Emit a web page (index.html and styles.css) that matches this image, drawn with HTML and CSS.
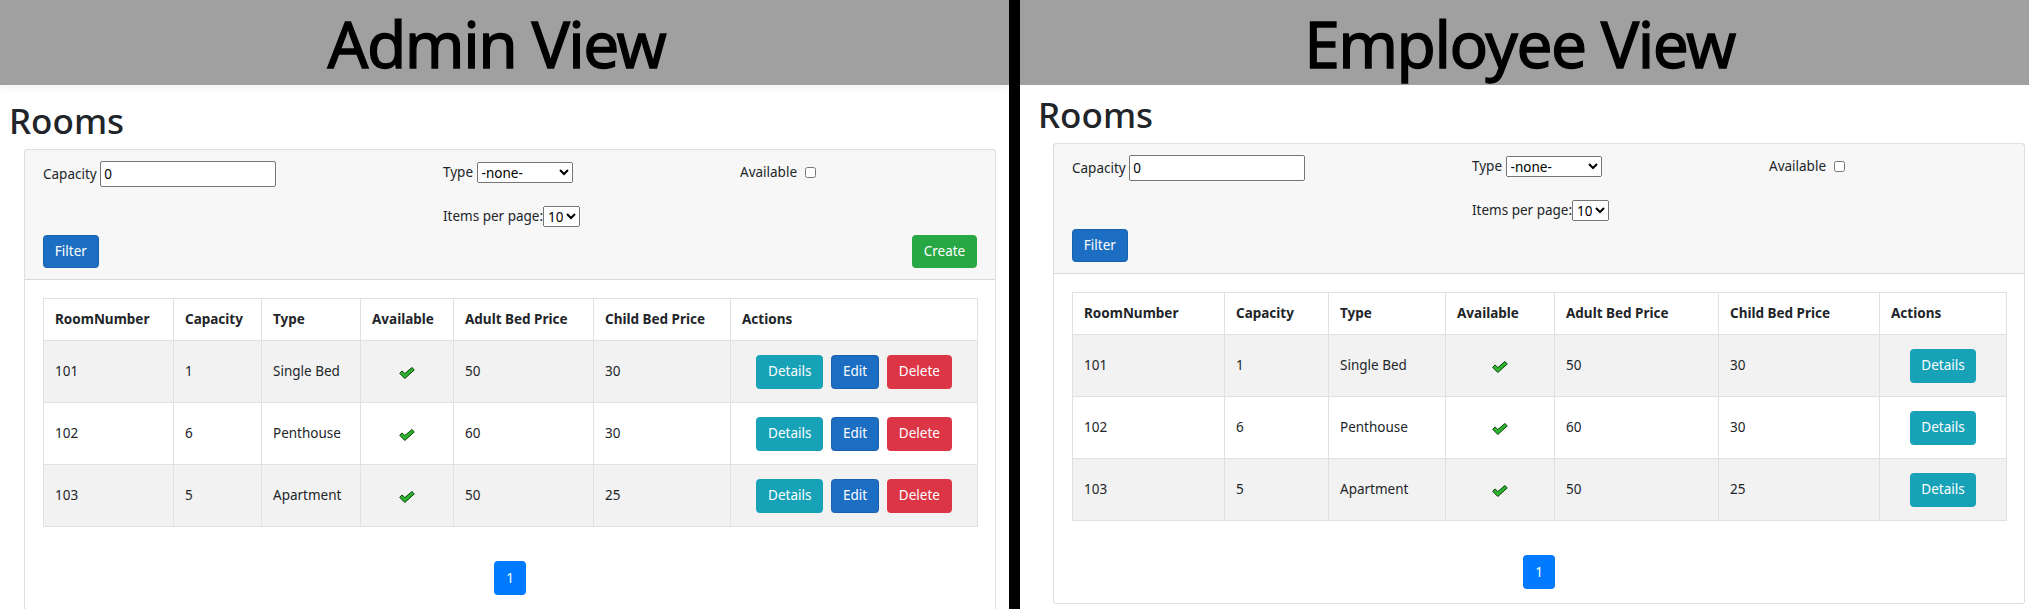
FILE: index.html
```html
<!DOCTYPE html>
<html lang="en">
<head>
<meta charset="utf-8">
<title>Rooms - Admin and Employee views</title>
<link rel="stylesheet" href="styles.css">
</head>
<body>
<div class="screen">
  <section class="panel panel-admin">
    <header class="banner"><span class="banner-title">Admin View</span></header>
    <main class="content">
      <h1 class="page-title">Rooms</h1>
      <div class="card">
        <div class="card-header">
          <div class="filters">
            <label class="field f-capacity">Capacity <input class="txt" type="text" value="0"></label>
            <label class="field f-type">Type <select class="sel sel-type"><option>-none-</option></select></label>
            <label class="field f-avail">Available <input class="chk" type="checkbox"></label>
            <label class="field f-items">Items per page:<select class="sel sel-items"><option>10</option></select></label>
          </div>
          <div class="toolbar">
            <button class="btn btn-primary">Filter</button>
            <button class="btn btn-success">Create</button>
          </div>
        </div>
        <div class="card-body">
          <table class="table">
            <colgroup>
              <col class="a-c1"><col class="a-c2"><col class="a-c3"><col class="a-c4"><col class="a-c5"><col class="a-c6"><col class="a-c7">
            </colgroup>
            <thead>
              <tr><th>RoomNumber</th><th>Capacity</th><th>Type</th><th>Available</th><th>Adult Bed Price</th><th>Child Bed Price</th><th>Actions</th></tr>
            </thead>
            <tbody>
              <tr>
                <td>101</td><td>1</td><td>Single Bed</td>
                <td class="center"><svg class="check" viewBox="0 0 16 12" width="16" height="12"><polygon points="0.7,6.3 3.1,3.9 5.8,6.6 12.9,0.5 15.3,2.9 5.8,11.5" /></svg></td>
                <td>50</td><td>30</td>
                <td class="center"><span class="row-actions"><button class="btn btn-sm btn-info">Details</button><button class="btn btn-sm btn-primary">Edit</button><button class="btn btn-sm btn-danger">Delete</button></span></td>
              </tr>
              <tr>
                <td>102</td><td>6</td><td>Penthouse</td>
                <td class="center"><svg class="check" viewBox="0 0 16 12" width="16" height="12"><polygon points="0.7,6.3 3.1,3.9 5.8,6.6 12.9,0.5 15.3,2.9 5.8,11.5" /></svg></td>
                <td>60</td><td>30</td>
                <td class="center"><span class="row-actions"><button class="btn btn-sm btn-info">Details</button><button class="btn btn-sm btn-primary">Edit</button><button class="btn btn-sm btn-danger">Delete</button></span></td>
              </tr>
              <tr>
                <td>103</td><td>5</td><td>Apartment</td>
                <td class="center"><svg class="check" viewBox="0 0 16 12" width="16" height="12"><polygon points="0.7,6.3 3.1,3.9 5.8,6.6 12.9,0.5 15.3,2.9 5.8,11.5" /></svg></td>
                <td>50</td><td>25</td>
                <td class="center"><span class="row-actions"><button class="btn btn-sm btn-info">Details</button><button class="btn btn-sm btn-primary">Edit</button><button class="btn btn-sm btn-danger">Delete</button></span></td>
              </tr>
            </tbody>
          </table>
          <ul class="pagination"><li><a class="page-link">1</a></li></ul>
        </div>
      </div>
    </main>
  </section>

  <div class="divider"></div>

  <section class="panel panel-employee">
    <header class="banner"><span class="banner-title">Employee View</span></header>
    <main class="content">
      <h1 class="page-title">Rooms</h1>
      <div class="card">
        <div class="card-header">
          <div class="filters">
            <label class="field f-capacity">Capacity <input class="txt" type="text" value="0"></label>
            <label class="field f-type">Type <select class="sel sel-type"><option>-none-</option></select></label>
            <label class="field f-avail">Available <input class="chk" type="checkbox"></label>
            <label class="field f-items">Items per page:<select class="sel sel-items"><option>10</option></select></label>
          </div>
          <div class="toolbar">
            <button class="btn btn-primary">Filter</button>
          </div>
        </div>
        <div class="card-body">
          <table class="table">
            <colgroup>
              <col class="e-c1"><col class="e-c2"><col class="e-c3"><col class="e-c4"><col class="e-c5"><col class="e-c6"><col class="e-c7">
            </colgroup>
            <thead>
              <tr><th>RoomNumber</th><th>Capacity</th><th>Type</th><th>Available</th><th>Adult Bed Price</th><th>Child Bed Price</th><th>Actions</th></tr>
            </thead>
            <tbody>
              <tr>
                <td>101</td><td>1</td><td>Single Bed</td>
                <td class="center"><svg class="check" viewBox="0 0 16 12" width="16" height="12"><polygon points="0.7,6.3 3.1,3.9 5.8,6.6 12.9,0.5 15.3,2.9 5.8,11.5" /></svg></td>
                <td>50</td><td>30</td>
                <td class="center"><span class="row-actions"><button class="btn btn-sm btn-info">Details</button></span></td>
              </tr>
              <tr>
                <td>102</td><td>6</td><td>Penthouse</td>
                <td class="center"><svg class="check" viewBox="0 0 16 12" width="16" height="12"><polygon points="0.7,6.3 3.1,3.9 5.8,6.6 12.9,0.5 15.3,2.9 5.8,11.5" /></svg></td>
                <td>60</td><td>30</td>
                <td class="center"><span class="row-actions"><button class="btn btn-sm btn-info">Details</button></span></td>
              </tr>
              <tr>
                <td>103</td><td>5</td><td>Apartment</td>
                <td class="center"><svg class="check" viewBox="0 0 16 12" width="16" height="12"><polygon points="0.7,6.3 3.1,3.9 5.8,6.6 12.9,0.5 15.3,2.9 5.8,11.5" /></svg></td>
                <td>50</td><td>25</td>
                <td class="center"><span class="row-actions"><button class="btn btn-sm btn-info">Details</button></span></td>
              </tr>
            </tbody>
          </table>
          <ul class="pagination"><li><a class="page-link">1</a></li></ul>
        </div>
      </div>
    </main>
  </section>
</div>
</body>
</html>
```

FILE: styles.css
```css
* { box-sizing: border-box; }

html, body { margin: 0; padding: 0; }

body {
  font-family: "Noto Sans", "Open Sans", sans-serif;
  font-size: 13.5px;
  line-height: 1.5;
  color: #212529;
  background: #fff;
}

.screen {
  display: flex;
  width: 2029px;
  height: 609px;
  overflow: hidden;
}

.panel {
  display: flex;
  flex-direction: column;
  flex: none;
}

.panel-admin { width: 1009px; }
.panel-employee { flex: 1; }

.divider {
  flex: none;
  width: 11px;
  background: #000;
}

/* banner */
.banner {
  height: 85px;
  flex: none;
  background: #a0a0a0;
  text-align: center;
  padding-top: 0;
}

.panel-admin .banner {
  padding-right: 16px;
  box-shadow: 0 3px 8px rgba(0, 0, 0, 0.06);
  position: relative;
  z-index: 1;
}

.panel-employee .banner { padding-right: 10px; }

.banner-title {
  display: inline-block;
  font-size: 64px;
  line-height: 88px;
  font-weight: 400;
  letter-spacing: -1.5px;
  -webkit-text-stroke: 1.3px #000;
  color: #000;
}

/* page heading */
.page-title {
  margin: 15px 0 7px;
  padding-left: 9px;
  font-size: 35px;
  font-weight: 500;
  line-height: 42px;
}

.panel-employee .page-title {
  margin-top: 9px;
  padding-left: 18px;
}

/* card */
.card {
  width: 972px;
  margin-left: 24px;
  border: 1px solid rgba(0, 0, 0, 0.125);
  border-radius: 3.6px;
  background: #fff;
}

.panel-employee .card { margin-left: 33px; }

.card-header {
  background: rgba(0, 0, 0, 0.03);
  border-bottom: 1px solid rgba(0, 0, 0, 0.125);
  padding: 11px 18px;
}

.filters {
  display: grid;
  grid-template-columns: 400px 297px 1fr;
  grid-template-rows: 26px 21px;
  row-gap: 19px;
  align-items: start;
}

.field {
  display: flex;
  align-items: center;
  white-space: pre;
}

.f-capacity { grid-column: 1; grid-row: 1; height: 26px; }
.f-type { grid-column: 2; grid-row: 1; height: 21px; margin-top: 1px; }
.f-avail { grid-column: 3; grid-row: 1; height: 21px; margin-top: 1px; }
.f-items { grid-column: 2; grid-row: 2; height: 21px; }

.txt {
  width: 176px;
  height: 26px;
  margin: 0;
  padding: 1px 3px;
  font: inherit;
  font-size: 13.5px;
  color: #000;
  border: 1px solid #767676;
  border-radius: 2px;
  background: #fff;
}

.sel {
  height: 21px;
  margin: 0;
  font-family: inherit;
  font-size: 13.5px;
  color: #000;
}

.sel-type { width: 96px; }
.sel-items { width: 37px; }

.chk {
  width: 11px;
  height: 11px;
  margin: 0 0 0 4px;
}

.toolbar {
  display: flex;
  justify-content: space-between;
  margin-top: 8px;
}

/* buttons */
.btn {
  display: inline-flex;
  align-items: center;
  justify-content: center;
  height: 33px;
  padding: 0 10.8px;
  margin: 0;
  font-family: inherit;
  font-size: 13.5px;
  line-height: 1;
  color: #fff;
  border: 1px solid transparent;
  border-radius: 3.6px;
  cursor: pointer;
}

.btn-sm { height: 34px; }

.btn-primary { background: #1b6ec2; border-color: #1861ac; }
.btn-success { background: #28a745; border-color: #28a745; }
.btn-info { background: #17a2b8; border-color: #17a2b8; }
.btn-danger { background: #dc3545; border-color: #dc3545; }

/* table */
.card-body { padding: 18px 18px 14px; }

.table {
  width: 100%;
  border-collapse: collapse;
  table-layout: fixed;
  margin-bottom: 34px;
}

.a-c1 { width: 130px; }
.a-c2 { width: 88px; }
.a-c3 { width: 99px; }
.a-c4 { width: 93px; }
.a-c5 { width: 140px; }
.a-c6 { width: 137px; }
.a-c7 { width: 247px; }

.e-c1 { width: 152px; }
.e-c2 { width: 104px; }
.e-c3 { width: 117px; }
.e-c4 { width: 109px; }
.e-c5 { width: 164px; }
.e-c6 { width: 161px; }
.e-c7 { width: 127px; }

.table th,
.table td {
  border: 1px solid #dee2e6;
  padding: 0 11px;
  text-align: left;
  vertical-align: middle;
  white-space: nowrap;
}

.table th {
  height: 42px;
  font-weight: 700;
}

.table td { height: 62px; }

.table tbody tr:nth-child(odd) { background: rgba(0, 0, 0, 0.05); }

.table td.center { text-align: center; }

.check {
  display: inline-block;
  vertical-align: middle;
}

.check polygon {
  fill: #2cb52c;
  stroke: #0d3f0d;
  stroke-width: 1;
  stroke-linejoin: round;
}

.row-actions {
  display: inline-flex;
  gap: 8px;
  vertical-align: middle;
}

/* pagination */
.pagination {
  display: flex;
  justify-content: center;
  list-style: none;
  margin: 0;
  padding: 0;
}

.page-link {
  display: flex;
  align-items: center;
  justify-content: center;
  width: 32px;
  height: 34px;
  color: #fff;
  background: #007bff;
  border-radius: 4px;
}
```
